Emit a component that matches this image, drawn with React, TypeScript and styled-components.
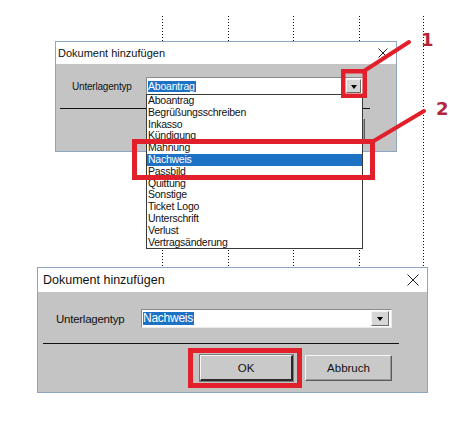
import React from "react";
import styled, { createGlobalStyle } from "styled-components";

const Global = createGlobalStyle`
  html, body { margin: 0; padding: 0; background: #ffffff; }
  body { font-family: "Liberation Sans", Arial, sans-serif; }
`;

type Size = {
  w: number; h: number; ml: number; mt: number;
  titleH: number; titleFont: number; titlePadL: number; closeSize: number; closePadR: number;
  labelPadL: number; labelW: number; rowPadT: number; comboW: number; comboH: number;
  fieldFont: number; fieldLs: number; hiH: number; arrowW: number; arrowH: number; arrowMR: number;
  sepMT: number; sepML: number; sepW: number; btnMT: number; btnH: number;
  okW: number; abW: number; btnGap: number; btnPadR: number; btnFont: number;
};

const topSize: Size = {
  w: 342, h: 111, ml: 55, mt: 41,
  titleH: 22, titleFont: 11, titlePadL: 2, closeSize: 10, closePadR: 8,
  labelPadL: 16, labelW: 74, rowPadT: 13, comboW: 217, comboH: 18,
  fieldFont: 10, fieldLs: -0.2, hiH: 11, arrowW: 15, arrowH: 14, arrowMR: 1,
  sepMT: 13, sepML: 4, sepW: 310, btnMT: 9, btnH: 23,
  okW: 81, abW: 75, btnGap: 10, btnPadR: 31, btnFont: 10,
};

const bottomSize: Size = {
  w: 391, h: 126, ml: 37, mt: 115,
  titleH: 24, titleFont: 12.5, titlePadL: 5, closeSize: 12, closePadR: 8,
  labelPadL: 18, labelW: 85, rowPadT: 17, comboW: 251, comboH: 19,
  fieldFont: 11.5, fieldLs: -0.25, hiH: 13, arrowW: 18, arrowH: 15, arrowMR: 2,
  sepMT: 15, sepML: 5, sepW: 356, btnMT: 11, btnH: 26,
  okW: 93, abW: 87, btnGap: 12, btnPadR: 35, btnFont: 11.5,
};

const Canvas = styled.div`
  position: relative;
  width: 463px;
  height: 424px;
  background: #ffffff;
  overflow: hidden;
`;

const Guides = styled.svg`
  position: absolute;
  left: 0;
  top: 0;
  z-index: 0;
`;

const Overlay = styled.svg`
  position: absolute;
  left: 0;
  top: 0;
  z-index: 5;
  pointer-events: none;
`;

const Callout = styled.span<{ $x: number; $y: number }>`
  position: absolute;
  left: ${(p) => p.$x}px;
  top: ${(p) => p.$y}px;
  z-index: 6;
  font-family: "DejaVu Sans", sans-serif;
  font-weight: bold;
  font-size: 18px;
  line-height: 18px;
  color: #b4243a;
`;

const Stack = styled.div`
  position: relative;
  z-index: 1;
  display: flex;
  flex-direction: column;
  align-items: flex-start;
`;

const Window = styled.div<{ $s: Size }>`
  box-sizing: border-box;
  width: ${(p) => p.$s.w}px;
  height: ${(p) => p.$s.h}px;
  margin-left: ${(p) => p.$s.ml}px;
  margin-top: ${(p) => p.$s.mt}px;
  border: 1px solid #8ea6c2;
  display: flex;
  flex-direction: column;
  background: #c4c4c4;
`;

const TitleBar = styled.div<{ $s: Size }>`
  height: ${(p) => p.$s.titleH}px;
  flex: none;
  background: #ffffff;
  display: flex;
  align-items: center;
  justify-content: space-between;
  padding-left: ${(p) => p.$s.titlePadL}px;
  padding-right: ${(p) => p.$s.closePadR}px;
  font-size: ${(p) => p.$s.titleFont}px;
  color: #111;
`;

const CloseIcon = styled.svg`
  display: block;
  flex: none;
`;

const Body = styled.div`
  flex: 1;
  display: flex;
  flex-direction: column;
  align-items: flex-start;
  background: #c4c4c4;
`;

const FieldRow = styled.div<{ $s: Size }>`
  display: flex;
  align-items: center;
  padding-top: ${(p) => p.$s.rowPadT}px;
  padding-left: ${(p) => p.$s.labelPadL}px;
`;

const Label = styled.span<{ $s: Size }>`
  width: ${(p) => p.$s.labelW}px;
  font-size: ${(p) => p.$s.fieldFont}px;
  letter-spacing: ${(p) => p.$s.fieldLs}px;
  color: #111;
`;

const Combo = styled.div<{ $s: Size }>`
  position: relative;
  box-sizing: border-box;
  width: ${(p) => p.$s.comboW}px;
  height: ${(p) => p.$s.comboH}px;
  background: #ffffff;
  border-top: 1px solid #8a8a8a;
  border-left: 1px solid #8a8a8a;
  border-right: 1px solid #eaeaea;
  border-bottom: 1px solid #eaeaea;
  display: flex;
  align-items: center;
  justify-content: space-between;
`;

const Selected = styled.span<{ $s: Size }>`
  margin-left: 1px;
  padding: 0 1px 0 0;
  height: ${(p) => p.$s.hiH}px;
  line-height: ${(p) => p.$s.hiH}px;
  background: #1e72c6;
  color: #ffffff;
  font-size: ${(p) => p.$s.fieldFont + 0.5}px;
  letter-spacing: ${(p) => p.$s.fieldLs}px;
`;

const ArrowButton = styled.div<{ $s: Size }>`
  box-sizing: border-box;
  width: ${(p) => p.$s.arrowW}px;
  height: ${(p) => p.$s.arrowH}px;
  margin-right: ${(p) => p.$s.arrowMR}px;
  background: #d6d6d6;
  border-top: 1px solid #f4f4f4;
  border-left: 1px solid #f4f4f4;
  border-right: 1px solid #6a6a6a;
  border-bottom: 1px solid #6a6a6a;
  display: flex;
  align-items: center;
  justify-content: center;
`;

const Triangle = styled.span`
  width: 0;
  height: 0;
  border-left: 3px solid transparent;
  border-right: 3px solid transparent;
  border-top: 4px solid #000;
  margin-top: 1px;
`;

const ListBox = styled.div<{ $s: Size }>`
  position: absolute;
  left: -1px;
  top: 100%;
  box-sizing: border-box;
  width: ${(p) => p.$s.comboW}px;
  background: #ffffff;
  border: 1px solid #3a3a3a;
  z-index: 3;
  display: flex;
  flex-direction: column;
`;

const ListItem = styled.div<{ $active?: boolean; $s: Size }>`
  height: 11.8px;
  line-height: 11.8px;
  padding-left: 1px;
  font-size: ${(p) => p.$s.fieldFont + 0.5}px;
  letter-spacing: -0.25px;
  white-space: nowrap;
  background: ${(p) => (p.$active ? "#1e72c6" : "transparent")};
  color: ${(p) => (p.$active ? "#ffffff" : "#111")};
`;

const Separator = styled.div<{ $s: Size }>`
  margin-top: ${(p) => p.$s.sepMT}px;
  margin-left: ${(p) => p.$s.sepML}px;
  width: ${(p) => p.$s.sepW}px;
  height: 1px;
  background: #111;
`;

const ButtonRow = styled.div<{ $s: Size }>`
  align-self: stretch;
  display: flex;
  justify-content: flex-end;
  gap: ${(p) => p.$s.btnGap}px;
  margin-top: ${(p) => p.$s.btnMT}px;
  padding-right: ${(p) => p.$s.btnPadR}px;
`;

const Button = styled.div<{ $w: number; $s: Size; $default?: boolean }>`
  box-sizing: border-box;
  width: ${(p) => p.$w}px;
  height: ${(p) => p.$s.btnH}px;
  display: flex;
  align-items: center;
  justify-content: center;
  background: #c9c9c9;
  font-size: ${(p) => p.$s.btnFont}px;
  color: #111;
  border-top: 1px solid #f6f6f6;
  border-left: 1px solid #f6f6f6;
  border-right: ${(p) => (p.$default ? "2px solid #2a2a2a" : "1px solid #5a5a5a")};
  border-bottom: ${(p) => (p.$default ? "2px solid #2a2a2a" : "1px solid #5a5a5a")};
  box-shadow: ${(p) => (p.$default ? "0 0 0 1px #7a7a7a" : "inset -1px -1px 0 #9a9a9a")};
`;

const items = [
  "Aboantrag",
  "Begrüßungsschreiben",
  "Inkasso",
  "Kündigung",
  "Mahnung",
  "Nachweis",
  "Passbild",
  "Quittung",
  "Sonstige",
  "Ticket Logo",
  "Unterschrift",
  "Verlust",
  "Vertragsänderung",
];

function Close({ size }: { size: number }) {
  return (
    <CloseIcon width={size} height={size} viewBox={`0 0 ${size} ${size}`}>
      <path d={`M0.5 0.5 L${size - 0.5} ${size - 0.5} M${size - 0.5} 0.5 L0.5 ${size - 0.5}`} stroke="#222" strokeWidth="1" fill="none" />
    </CloseIcon>
  );
}

function Dialog({ s, value, open }: { s: Size; value: string; open?: boolean }) {
  return (
    <Window $s={s}>
      <TitleBar $s={s}>
        <span>Dokument hinzufügen</span>
        <Close size={s.closeSize} />
      </TitleBar>
      <Body>
        <FieldRow $s={s}>
          <Label $s={s}>Unterlagentyp</Label>
          <Combo $s={s}>
            <Selected $s={s}>{value}</Selected>
            <ArrowButton $s={s}>
              <Triangle />
            </ArrowButton>
            {open && (
              <ListBox $s={s}>
                {items.map((it) => (
                  <ListItem key={it} $s={s} $active={it === "Nachweis"}>
                    {it}
                  </ListItem>
                ))}
              </ListBox>
            )}
          </Combo>
        </FieldRow>
        <Separator $s={s} />
        <ButtonRow $s={s}>
          <Button $s={s} $w={s.okW} $default>
            OK
          </Button>
          <Button $s={s} $w={s.abW}>
            Abbruch
          </Button>
        </ButtonRow>
      </Body>
    </Window>
  );
}

const guideXs = [162.5, 228.5, 293.5, 359.5, 423.5];

export default function App() {
  return (
    <>
      <Global />
      <Canvas>
        <Guides width={463} height={424}>
          {guideXs.map((x) => (
            <line key={x} x1={x} y1={16} x2={x} y2={268} stroke="#111" strokeWidth="1" strokeDasharray="1 2" />
          ))}
        </Guides>
        <Stack>
          <Dialog s={topSize} value="Aboantrag" open />
          <Dialog s={bottomSize} value="Nachweis" />
        </Stack>
        <Overlay width={463} height={424}>
          <g stroke="#e2202b" fill="none">
            <rect x={343.25} y={71.25} width={21.5} height={24.5} strokeWidth={4.5} />
            <rect x={134.5} y={141.5} width={238} height={36} strokeWidth={5} />
            <rect x={190.5} y={350.5} width={109} height={35} strokeWidth={5} />
            <line x1={364} y1={71} x2={409} y2={42} strokeWidth={4} strokeLinecap="round" />
            <line x1={372} y1={142} x2={424} y2={111} strokeWidth={4} strokeLinecap="round" />
          </g>
        </Overlay>
        <Callout $x={421} $y={31}>1</Callout>
        <Callout $x={436} $y={100}>2</Callout>
      </Canvas>
    </>
  );
}
